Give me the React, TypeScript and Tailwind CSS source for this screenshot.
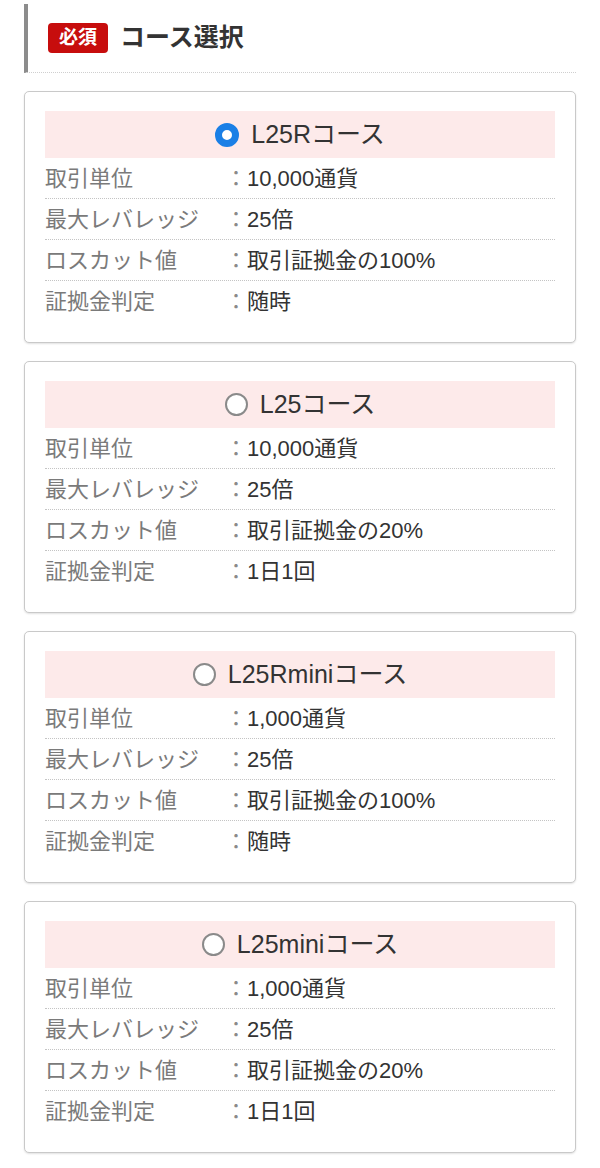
type Course = {
  name: string;
  checked: boolean;
  rows: [string, string][];
};

const courses: Course[] = [
  {
    name: "L25Rコース",
    checked: true,
    rows: [
      ["取引単位", "10,000通貨"],
      ["最大レバレッジ", "25倍"],
      ["ロスカット値", "取引証拠金の100%"],
      ["証拠金判定", "随時"],
    ],
  },
  {
    name: "L25コース",
    checked: false,
    rows: [
      ["取引単位", "10,000通貨"],
      ["最大レバレッジ", "25倍"],
      ["ロスカット値", "取引証拠金の20%"],
      ["証拠金判定", "1日1回"],
    ],
  },
  {
    name: "L25Rminiコース",
    checked: false,
    rows: [
      ["取引単位", "1,000通貨"],
      ["最大レバレッジ", "25倍"],
      ["ロスカット値", "取引証拠金の100%"],
      ["証拠金判定", "随時"],
    ],
  },
  {
    name: "L25miniコース",
    checked: false,
    rows: [
      ["取引単位", "1,000通貨"],
      ["最大レバレッジ", "25倍"],
      ["ロスカット値", "取引証拠金の20%"],
      ["証拠金判定", "1日1回"],
    ],
  },
];

function Radio({ checked }: { checked: boolean }) {
  if (checked) {
    return <span className="h-[24px] w-[24px] shrink-0 rounded-full border-[7px] border-[#1a7fe6] bg-white" />;
  }
  return <span className="h-[23px] w-[23px] shrink-0 rounded-full border-2 border-[#8a8a8a] bg-white" />;
}

function CourseCard({ course }: { course: Course }) {
  return (
    <div className="rounded-[5px] border border-[#c9c9c9] bg-white px-[20px] pt-[19px] pb-[20px] shadow-[0_1px_2px_rgba(0,0,0,0.12)]">
      <div className="flex h-[47px] items-center justify-center gap-[12px] bg-[#fdeaea]">
        <Radio checked={course.checked} />
        <span className="text-[25px] leading-none text-[#333]">{course.name}</span>
      </div>
      {course.rows.map(([label, value], i) => (
        <div
          key={label}
          className={
            i < course.rows.length - 1
              ? "flex h-[41px] items-center border-b border-dotted border-[#c4c4c4] text-[22px]"
              : "flex h-[41px] items-center text-[22px]"
          }
        >
          <span className="w-[180px] shrink-0 text-[#7a7a7a]">{label}</span>
          <span className="text-[#8a8a8a]">：</span>
          <span className="text-[#333]">{value}</span>
        </div>
      ))}
    </div>
  );
}

export default function App() {
  return (
    <div
      className="min-h-[1168px] bg-white px-[24px] pt-[4px] pb-[14px]"
      style={{ fontFamily: '"Liberation Sans", "Noto Sans CJK JP", sans-serif' }}
    >
      <div className="flex h-[69px] items-center gap-[12px] border-b border-dotted border-b-[#cfcfcf] border-l-[4px] border-l-[#8c8c8c] pl-[20px] [border-left-style:solid]">
        <span className="flex h-[30px] items-center rounded-[4px] bg-[#c70d0d] px-[11px] text-[19px] font-bold text-white">
          必須
        </span>
        <span className="text-[25px] font-bold text-[#333]">コース選択</span>
      </div>
      <div className="mt-[18px] flex flex-col gap-[18px]">
        {courses.map((c) => (
          <CourseCard key={c.name} course={c} />
        ))}
      </div>
    </div>
  );
}
